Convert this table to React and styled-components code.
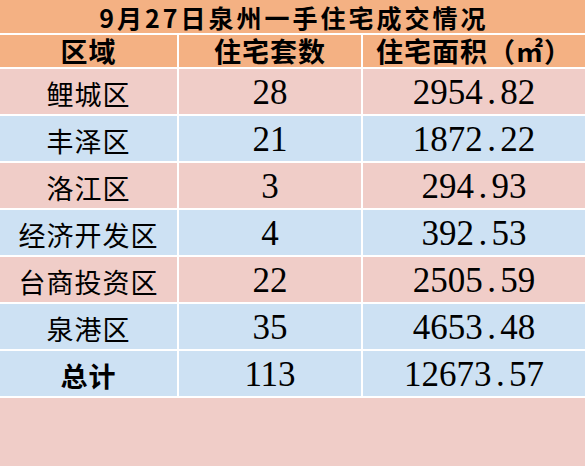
import React from "react";
import styled, { createGlobalStyle } from "styled-components";

const Global = createGlobalStyle`
  html, body { margin: 0; padding: 0; background: #ffffff; }
  #root { width: 585px; height: 466px; }
`;

const COLORS = {
  orange: "#F4B183",
  pink: "#F0CDC8",
  blue: "#CDE1F3",
};

const Sheet = styled.div`
  width: 585px;
  height: 466px;
  background: #ffffff;
  display: grid;
  grid-template-columns: 177px 182px 1fr;
  grid-template-rows: 33px 32px repeat(7, 45px) 1fr;
  gap: 2px;
  overflow: hidden;
`;

const Cell = styled.div`
  background: ${(p) => COLORS[p.$tone]};
  display: flex;
  align-items: center;
  justify-content: center;
  color: #000;
  white-space: nowrap;
  grid-column: ${(p) => (p.$span ? "1 / -1" : "auto")};
`;

const Title = styled.span`
  font-family: "Noto Sans CJK SC", sans-serif;
  font-weight: 700;
  font-size: 25px;
  letter-spacing: 3px;
  line-height: 30px;
  padding-left: 3px;
`;

const Head = styled.span`
  font-family: "Noto Sans CJK SC", sans-serif;
  font-weight: 700;
  font-size: 27px;
  line-height: 30px;
  letter-spacing: 1px;
`;

const Name = styled.span`
  font-family: "Noto Sans CJK SC", sans-serif;
  font-weight: ${(p) => (p.$bold ? 700 : 400)};
  font-size: 27px;
  line-height: 34px;
  letter-spacing: 1px;
  margin-top: 4px;
`;

const Num = styled.span`
  font-family: "Liberation Serif", Tinos, "Times New Roman", "DejaVu Serif", serif;
  font-size: 35px;
  line-height: 38px;
  margin-top: 3px;
`;

const Dot = styled.span`
  display: inline-block;
  width: 0.5em;
  text-align: center;
`;

const Figure = ({ value }) => {
  const parts = String(value).split(".");
  return (
    <Num>
      {parts[0]}
      {parts.length > 1 && (
        <>
          <Dot>.</Dot>
          {parts[1]}
        </>
      )}
    </Num>
  );
};

const rows = [
  { name: "鲤城区", units: 28, area: "2954.82", tone: "pink" },
  { name: "丰泽区", units: 21, area: "1872.22", tone: "blue" },
  { name: "洛江区", units: 3, area: "294.93", tone: "pink" },
  { name: "经济开发区", units: 4, area: "392.53", tone: "blue" },
  { name: "台商投资区", units: 22, area: "2505.59", tone: "pink" },
  { name: "泉港区", units: 35, area: "4653.48", tone: "blue" },
  { name: "总计", units: 113, area: "12673.57", tone: "blue", bold: true },
];

export default function App() {
  return (
    <>
      <Global />
      <Sheet>
        <Cell $tone="orange" $span>
          <Title>9月27日泉州一手住宅成交情况</Title>
        </Cell>
        <Cell $tone="orange">
          <Head>区域</Head>
        </Cell>
        <Cell $tone="orange">
          <Head>住宅套数</Head>
        </Cell>
        <Cell $tone="orange">
          <Head>住宅面积（㎡）</Head>
        </Cell>
        {rows.map((r) => (
          <React.Fragment key={r.name}>
            <Cell $tone={r.tone}>
              <Name $bold={r.bold}>{r.name}</Name>
            </Cell>
            <Cell $tone={r.tone}>
              <Figure value={r.units} />
            </Cell>
            <Cell $tone={r.tone}>
              <Figure value={r.area} />
            </Cell>
          </React.Fragment>
        ))}
        <Cell $tone="pink" $span />
      </Sheet>
    </>
  );
}
